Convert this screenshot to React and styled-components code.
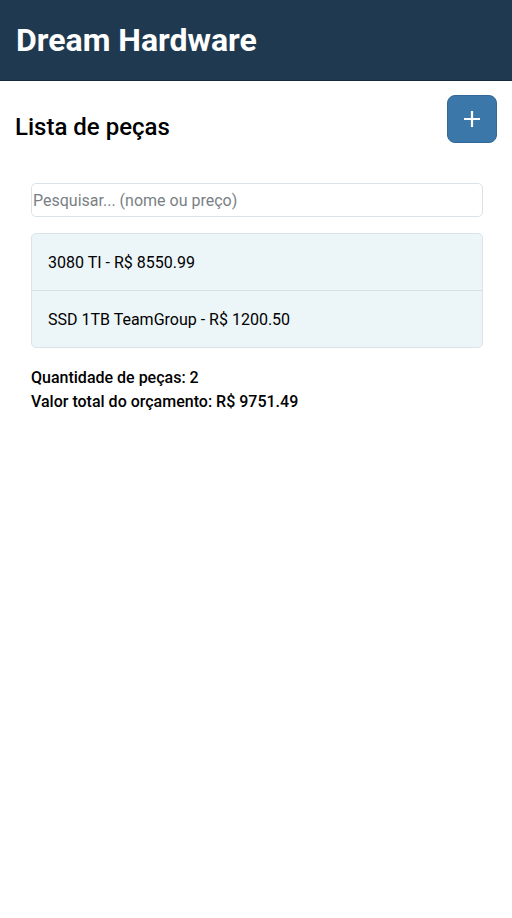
import React from 'react';
import styled, { createGlobalStyle } from 'styled-components';

const GlobalStyle = createGlobalStyle`
	body {
		margin: 0;
		font-family: Roboto, "Liberation Sans", sans-serif;
		background: #fff;
		color: #000;
	}
`;

const Header = styled.header`
	height: 80px;
	background-color: #1f3a50;
	border-bottom: 1px solid #152a3b;
	display: flex;
	align-items: center;
	padding: 0 16px;
	h1 {
		margin: 0;
		color: #fff;
		font-size: 32px;
		font-weight: 700;
	}
`;

const Main = styled.main`
	padding: 14px 15px 0 15px;
`;

const TitleRow = styled.div`
	display: flex;
	align-items: flex-start;
	justify-content: space-between;
	h2 {
		margin: 18px 0 0 0;
		font-size: 24px;
		font-weight: 500;
	}
`;

const AddButton = styled.button`
	width: 50px;
	height: 48px;
	border: 1px solid #33699a;
	border-radius: 8px;
	background-color: #3b77a9;
	display: flex;
	align-items: center;
	justify-content: center;
	padding: 0;
	cursor: pointer;
`;

const Content = styled.div`
	padding: 40px 16px 0 16px;
	width: 452px;
`;

const SearchInput = styled.input`
	box-sizing: border-box;
	width: 452px;
	height: 34px;
	border: 1px solid #dbe3e8;
	border-radius: 5px;
	padding: 0 1px;
	font-family: Roboto, "Liberation Sans", sans-serif;
	font-size: 16px;
	outline: none;
	&::placeholder {
		color: #7a7f85;
	}
`;

const List = styled.ul`
	list-style: none;
	margin: 16px 0 0 0;
	padding: 0;
	width: 450px;
	border: 1px solid #dbe3e8;
	border-radius: 5px;
	background-color: #ecf5f8;
	overflow: hidden;
`;

const Item = styled.li`
	height: 56px;
	display: flex;
	align-items: center;
	padding: 0 16px;
	font-size: 16px;
	& + & {
		border-top: 1px solid #d6dfe5;
	}
`;

const Summary = styled.div`
	margin-top: 18px;
	p {
		margin: 0;
		font-size: 16px;
		font-weight: 500;
		line-height: 24px;
	}
`;

const pecas = [
	{ nome: '3080 TI', preco: 8550.99 },
	{ nome: 'SSD 1TB TeamGroup', preco: 1200.5 },
];

const App = () => {
	const total = pecas.reduce((acc, p) => acc + p.preco, 0);
	return (
		<>
			<GlobalStyle />
			<Header>
				<h1>Dream Hardware</h1>
			</Header>
			<Main>
				<TitleRow>
					<h2>Lista de peças</h2>
					<AddButton aria-label="Adicionar">
						<svg width="20" height="20" viewBox="0 0 20 20">
							<path d="M10 2v16M2 10h16" stroke="#fff" strokeWidth="2.2" />
						</svg>
					</AddButton>
				</TitleRow>
				<Content>
					<SearchInput placeholder="Pesquisar... (nome ou preço)" />
					<List>
						{pecas.map((p) => (
							<Item key={p.nome}>
								{p.nome} - R$ {p.preco.toFixed(2)}
							</Item>
						))}
					</List>
					<Summary>
						<p>Quantidade de peças: {pecas.length}</p>
						<p>Valor total do orçamento: R$ {total.toFixed(2)}</p>
					</Summary>
				</Content>
			</Main>
		</>
	);
};

export default App;
